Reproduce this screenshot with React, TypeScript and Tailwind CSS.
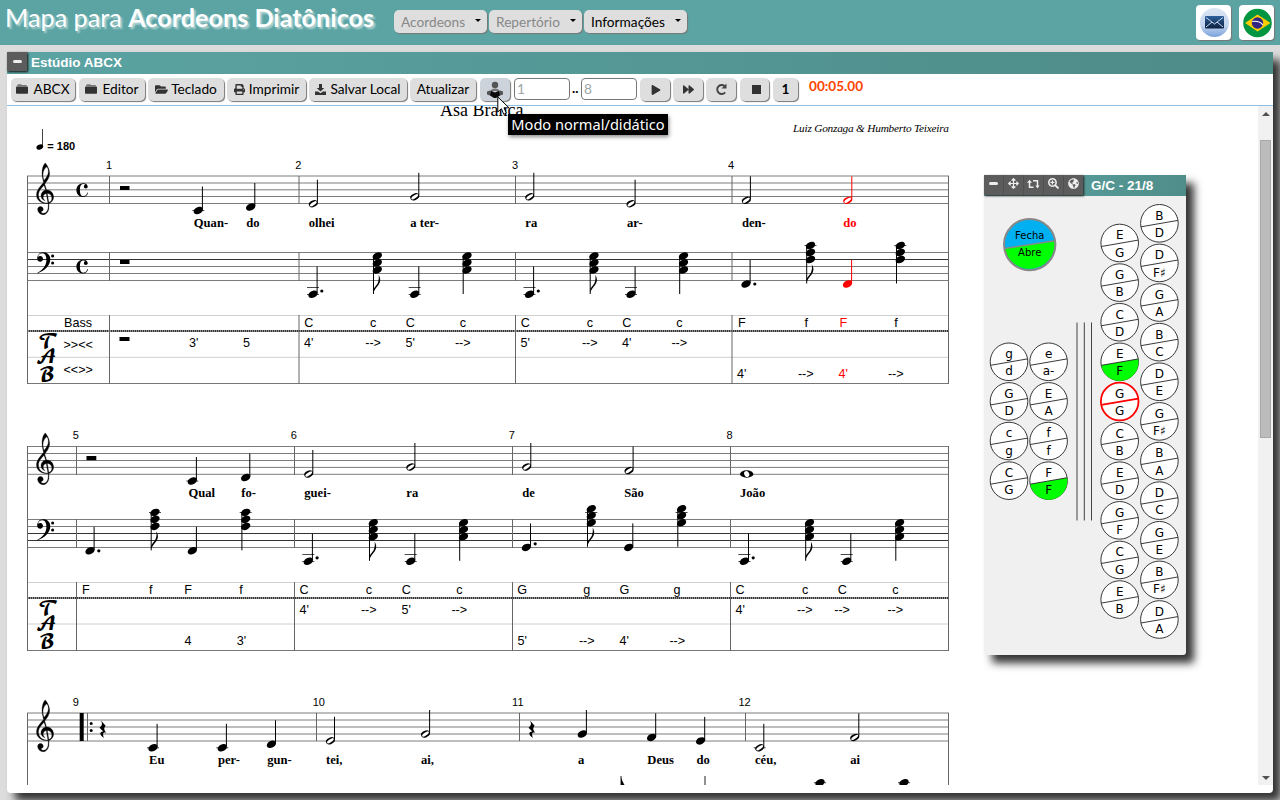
import React from "react";
import { FaPrint, FaFolderOpen, FaPlay, FaForward, FaSearchPlus, FaGlobeAmericas, FaArrowsAlt } from "react-icons/fa";

/* ---------- music notation primitives ---------- */

const TREBLE =
  "M9.69-37.41c.09-.09.24-.06.36 0c.12.09.57.6.96 1.11c1.77 2.34 3.21 5.85 3.57 8.73c.21 1.56.03 3.27-.45 4.86c-.69 2.31-1.92 4.47-4.23 7.44c-.3.39-.57.72-.6.75c-.03.06 0 .15.18.78c.54 1.68 1.38 4.44 1.68 5.49l.09.42l.39 0c1.47.09 2.76.51 3.96 1.29c1.83 1.23 3.06 3.21 3.39 5.52c.09.45.12 1.29.06 1.74c-.09 1.02-.33 1.83-.75 2.73c-.84 1.71-2.28 3.06-4.02 3.72l-.33.12l.03 1.26c0 1.74-.06 3.63-.21 4.62c-.45 3.06-2.19 5.49-4.47 6.21c-.57.18-.9.21-1.59.21c-.69 0-1.02-.03-1.65-.21c-1.14-.27-2.13-.84-2.94-1.65c-.99-.99-1.56-2.16-1.71-3.54c-.09-.81.06-1.53.45-2.13c.63-.99 1.83-1.56 3-1.53c1.5.09 2.64 1.32 2.73 2.94c.06 1.47-.93 2.7-2.37 2.97l-.3.1c.9 1.1 1.9 1.6 3.2 1.5c3.2-.2 4.9-3.2 5.1-8.4l-.02-2.5l-1.9.1c-4.4.1-8.4-2-10.2-5.4c-1.5-3-1.2-6.4.3-9.3c1.5-2.9 3.8-5.4 6.6-8.6l-.5-2c-1.3-5-1.9-10.6-.3-15.2c.6-2 1.7-3.6 2.6-4.6zM11.3-33.2c-2.3 1-4.1 5.3-4 8.9c.1 2.1.5 4 1.1 6.1c2.6-3.2 4.7-6.3 4.9-9.6c.1-2.6-.6-4.9-2-5.4zM8.5-13c-3.3 3.6-5.5 6-6.1 9.2c-.7 3.5.8 7.2 4 9.2c1.8 1.1 4.1 1.5 6.4 1.3l-1.8-10.5c-2.2.5-3.5 2-3.5 4.1c0 1.6.8 2.9 2.3 3.9c-3-.9-4.7-3-4.7-5.7c0-3.1 2-5.5 5.2-6.4zM12.1-4l1.7 10.2c2.2-.8 3.6-2.8 3.4-5.3c-.2-3-2.2-4.9-5.1-4.9z";

function Treble({ y }: { y: number }) {
  return <path d={TREBLE} fillRule="evenodd" transform={`translate(36.4 ${y}) scale(.9)`} stroke="black" strokeWidth=".35" />;
}

function BassClef({ y }: { y: number }) {
  return (
    <g transform={`translate(37 ${y})`}>
      <path d="M.2 20.6c5.6-3 9.2-7.2 9.2-13C9.4 3.600 8.300.800 5.300.800C3 .800 1.200 2.300.900 4.400A2.900 2.900 0 1 1 .200 6.500C.100 2.700 2.400-.200 6.100-.200c4.300 0 7.200 2.700 7.200 7c0 6.500-5.600 11.400-13.100 14.100z" />
      <circle cx="15.600" cy="3.600" r="1.500" />
      <circle cx="15.600" cy="10.600" r="1.500" />
    </g>
  );
}

function CommonTime({ y }: { y: number }) {
  return (
    <path
      transform={`translate(76.300 ${y})`}
      d="M7-.1C2.800-.1.100 2.800.100 6.800s2.700 6.900 6.600 6.900c2.700 0 4.500-1.700 5-4.300l-.6-.1c-.6 2.200-2 3.600-3.900 3.600c-2.700 0-3.600-2.300-3.600-6.100c0-4.200 1-6.200 3.600-6.200c.8 0 1.500.2 2 .7a2 2 0 1 0 2.300 2.500C11.400 1.500 9.700-.1 7-.1z"
    />
  );
}

function Head({ x, y, c = "black" }: { x: number; y: number; c?: string }) {
  return <ellipse cx={x} cy={y} rx="4.900" ry="3.400" fill={c} transform={`rotate(-26 ${x} ${y})`} />;
}

function Ledger({ x, y }: { x: number; y: number }) {
  return <path d={`M${x - 6} ${y}H${x + 6}`} stroke="#333" strokeWidth=".9" />;
}

type N = { x: number; y: number; h?: boolean; led?: number[]; top?: number; c?: string; dot?: number };

function Note({ x, y, h, led = [], top, c = "black", dot }: N) {
  return (
    <g>
      {led.map((l) => (
        <Ledger key={l} x={x} y={l} />
      ))}
      <path d={`M${x + 4.100} ${y - 1}V${top ?? y - 24}`} stroke={c} strokeWidth="1" />
      {h ? (
        <g transform={`rotate(-26 ${x} ${y})`}>
          <ellipse cx={x} cy={y} rx="4.700" ry="3.200" fill={c} />
          <ellipse cx={x} cy={y} rx="4" ry="1.450" fill="white" transform={`rotate(-9 ${x} ${y})`} />
        </g>
      ) : (
        <Head x={x} y={y} c={c} />
      )}
      {dot !== undefined && <circle cx={x + 8.800} cy={dot} r="1.600" />}
    </g>
  );
}

type Ch = { x: number; y: number; flag?: boolean; led?: number };

function Chord({ x, y, flag, led }: Ch) {
  const b = y + 38;
  return (
    <g>
      {led !== undefined && <Ledger x={x} y={led} />}
      <path d={`M${x - 3.800} ${y}V${b}`} stroke="black" strokeWidth="1" />
      <Head x={x} y={y} />
      <Head x={x} y={y + 7} />
      <Head x={x} y={y + 14} />
      {flag && (
        <path
          d={`M${x + 1.300} ${b - 19}c2.400 3.600 2 7-.2 10c-1.500 2-3.700 4-4.900 7.500v-3.500c1.300-2.400 3.300-3.800 4.300-6.100c1-2.500 1.300-5 .8-7.900z`}
        />
      )}
    </g>
  );
}

function QuarterRest({ x, y }: { x: number; y: number }) {
  return (
    <path
      transform={`translate(${x} ${y})`}
      d="M-1.700 0L2.900 5.200C1.200 7.400.900 8.800 3.500 12.200C.600 11.300-.4 12.700 1.200 17.400C-3.500 14.800-3.300 10.800.600 11.100L-3.200 7.200C-.4 5-.1 3.400-1.700 0z"
    />
  );
}

const sans = "font-['Liberation_Sans',sans-serif]";
const serif = "font-['Liberation_Serif',serif]";

type T = [number, string, string?];

function Row({ y, items }: { y: number; items: T[] }) {
  return (
    <g className={`${sans} text-[12.6px]`} textAnchor="middle">
      {items.map(([x, t, c]) => (
        <text key={x} x={x - 4.200} y={y} fill={c ?? "black"}>
          {t}
        </text>
      ))}
    </g>
  );
}

function Lyrics({ y, items }: { y: number; items: T[] }) {
  return (
    <g className={`${serif} text-[12.6px] font-bold`}>
      {items.map(([x, t, c]) => (
        <text key={x} x={x} y={y} fill={c ?? "black"}>
          {t}
        </text>
      ))}
    </g>
  );
}

function Numbers({ y, items }: { y: number; items: T[] }) {
  return (
    <g className={`${sans} text-[11px]`} textAnchor="middle">
      {items.map(([x, t]) => (
        <text key={x} x={x} y={y}>
          {t}
        </text>
      ))}
    </g>
  );
}

function Lines({ ys, dark = [] }: { ys: number[]; dark?: number[] }) {
  return (
    <g strokeWidth="1">
      {ys.map((y) => (
        <path key={y} d={`M27 ${y}H949`} stroke={dark.includes(y) ? "#333" : "#7c7c7c"} />
      ))}
    </g>
  );
}

function Bars({ xs, spans }: { xs: number[]; spans: [number, number][] }) {
  return (
    <g stroke="#666" strokeWidth="1">
      {xs.map((x) => spans.map(([a, b]) => <path key={`${x}-${a}`} d={`M${x} ${a}V${b}`} />))}
    </g>
  );
}

function TabStaff({ top, dash, mid, bottom }: { top: number; dash: number; mid: number; bottom: number }) {
  return (
    <g>
      <path d={`M27 ${top}H949`} stroke="#d0d0d0" />
      <path d={`M27 ${dash}H949`} stroke="#8a8a8a" strokeWidth="1.600" />
      <path d={`M27 ${dash}H949`} stroke="#111" strokeWidth="1.600" strokeDasharray="1.200 .8" />
      <path d={`M27 ${mid}H949`} stroke="#d0d0d0" />
      <path d={`M27 ${bottom}H949`} stroke="#777" />
      <g className="font-['DejaVu_Math_TeX_Gyre','DejaVu_Serif',serif] text-[18px]" textAnchor="middle">
        <text x="48.300" y={dash + 17}>𝓣</text>
        <text x="46" y={dash + 32}>𝓐</text>
        <text x="46.500" y={dash + 49.500}>𝓑</text>
      </g>
    </g>
  );
}

const RED = "#ff0000";

function Score() {
  return (
    <svg className="block h-[679px] w-[1251px]" viewBox="7 106 1251 679">
      <text x="440" y="116" className={`${serif} text-[18px]`}>Asa Branca</text>
      <text x="949" y="132" textAnchor="end" textLength="156" className={`${serif} text-[11.3px] italic`}>
        Luiz Gonzaga &amp; Humberto Teixeira
      </text>
      <path d="M42.500 146V129" stroke="#444" />
      <ellipse cx="39.800" cy="147" rx="3.500" ry="2.500" transform="rotate(-24 39.800 147)" />
      <text x="47.300" y="150" className={`${sans} text-[11px] font-bold`}>= 180</text>

      {/* system 1 */}
      <Numbers y={169} items={[[109, "1"], [298.300, "2"], [515, "3"], [731, "4"]]} />
      <Lines ys={[176, 183, 189.800, 196.500, 203.500]} />
      <Lines ys={[252.500, 259.500, 266.500, 273.500, 280.500]} dark={[259.500]} />
      <TabStaff top={315.500} dash={331} mid={357.300} bottom={383.500} />
      <Bars xs={[27.500, 948.500]} spans={[[176, 384]]} />
      <Bars xs={[109.500, 299, 515.500, 732, 948.500]} spans={[[176, 204], [252, 281], [315, 384]]} />
      <Treble y={197} />
      <BassClef y={252.500} />
      <CommonTime y={183.300} />
      <CommonTime y={259.800} />
      <g>
        <rect x="120" y="186" width="9.500" height="4" />
        <rect x="120" y="260" width="9.500" height="4" />
        <rect x="119.500" y="337" width="10" height="4" />
      </g>
      <Note x={198.300} y={210.500} led={[210.500]} />
      <Note x={250.700} y={207} />
      <Note x={313.300} y={203.700} h />
      <Note x={414.700} y={196.800} h />
      <Note x={529.700} y={196.800} h />
      <Note x={631} y={203.700} h />
      <Note x={746.300} y={200.300} h />
      <Note x={847.700} y={200.300} h c={RED} />
      <Lyrics
        y={227}
        items={[[193.800, "Quan-"], [246.300, "do"], [308.700, "olhei"], [410.300, "a ter-"], [525.300, "ra"], [627, "ar-"], [742, "den-"], [843.300, "do", RED]]}
      />
      <Note x={313} y={294.300} led={[287.500, 294.500]} top={266.500} dot={291} />
      <Chord x={377.300} y={256} flag />
      <Note x={414.700} y={294.300} led={[287.500, 294.500]} top={266.500} />
      <Chord x={467} y={256} />
      <Note x={529.500} y={294.300} led={[287.500, 294.500]} top={266.500} dot={291} />
      <Chord x={594} y={256} flag />
      <Note x={631} y={294.300} led={[287.500, 294.500]} top={266.500} />
      <Chord x={683.500} y={256} />
      <Note x={746} y={284} dot={284} />
      <Chord x={810.500} y={245.500} flag led={245.500} />
      <Note x={847.500} y={284} c={RED} />
      <Chord x={900.300} y={245.500} led={245.500} />
      <g className={`${sans} text-[12.6px]`}>
        <text x="64" y="327">Bass</text>
        <text x="63.500" y="349">&gt;&gt;&lt;&lt;</text>
        <text x="63.500" y="374">&lt;&lt;&gt;&gt;</text>
      </g>
      <Row
        y={327}
        items={[[313, "C"], [377.300, "c"], [414.500, "C"], [467, "c"], [529.500, "C"], [594, "c"], [631, "C"], [683.500, "c"], [746, "F"], [810.500, "f"], [847.500, "F", RED], [900.300, "f"]]}
      />
      <Row
        y={347}
        items={[[198, "3'"], [250.700, "5"], [313, "4'"], [377.300, "-->"], [414.500, "5'"], [467, "-->"], [529.500, "5'"], [594, "-->"], [631, "4'"], [683.500, "-->"]]}
      />
      <Row y={378} items={[[746, "4'"], [810, "-->"], [847.500, "4'", RED], [900, "-->"]]} />

      {/* system 2 */}
      <Numbers y={439} items={[[75.800, "5"], [293.800, "6"], [511.700, "7"], [729.500, "8"]]} />
      <Lines ys={[446.500, 453.500, 460.500, 467.400, 474.300]} />
      <Lines ys={[519.500, 526.500, 533.500, 540.500, 547.500]} dark={[533.500, 540.500]} />
      <TabStaff top={582.500} dash={598} mid={624} bottom={650.500} />
      <Bars xs={[27.500, 948.500]} spans={[[446, 651]]} />
      <Bars xs={[76.500, 294.500, 512.500, 730.500, 948.500]} spans={[[446, 475], [519, 548], [582, 651]]} />
      <Treble y={467} />
      <BassClef y={519.500} />
      <rect x="86.500" y="456" width="9.800" height="4.200" />
      <Note x={192.300} y={481} led={[481]} />
      <Note x={245.700} y={477.500} />
      <Note x={308.700} y={474} h />
      <Note x={410.800} y={467} h />
      <Note x={526.700} y={467} h />
      <Note x={629} y={470.500} h />
      <ellipse cx="746.700" cy="474" rx="6.700" ry="3.700" />
      <ellipse cx="746.700" cy="474" rx="2.400" ry="3.100" fill="white" transform="rotate(-28 746.700 474)" />
      <Lyrics
        y={497}
        items={[[188.500, "Qual"], [241.300, "fo-"], [304.300, "guei-"], [406.300, "ra"], [522.300, "de"], [624.300, "São"], [740, "João"]]}
      />
      <Note x={90} y={550.800} dot={550.800} />
      <Chord x={155} y={512.400} flag led={512.500} />
      <Note x={192.300} y={550.800} />
      <Chord x={245.700} y={512.400} led={512.500} />
      <Note x={308.300} y={561.300} led={[554.500, 561.500]} top={533.500} dot={557.800} />
      <Chord x={373.300} y={522.800} flag />
      <Note x={410.700} y={561.300} led={[554.500, 561.500]} top={533.500} />
      <Chord x={463.500} y={522.800} />
      <Note x={526.400} y={547.400} dot={543.800} />
      <Chord x={591.300} y={508.800} flag led={512.500} />
      <Note x={628.700} y={547.400} />
      <Chord x={681.600} y={508.800} led={512.500} />
      <Note x={744.400} y={561.300} led={[554.500, 561.500]} top={533.500} dot={557.800} />
      <Chord x={809.500} y={522.800} flag />
      <Note x={846.700} y={561.300} led={[554.500, 561.500]} top={533.500} />
      <Chord x={899.600} y={522.800} />
      <Row
        y={594}
        items={[[90, "F"], [155, "f"], [192.300, "F"], [245.300, "f"], [308.300, "C"], [373, "c"], [410.500, "C"], [463.500, "c"], [526.400, "G"], [591, "g"], [628.500, "G"], [681.300, "g"], [744.300, "C"], [809.300, "c"], [846.500, "C"], [899.500, "c"]]}
      />
      <Row
        y={614}
        items={[[308.300, "4'"], [373, "-->"], [410.500, "5'"], [463.500, "-->"], [744.300, "4'"], [809, "-->"], [846.300, "-->"], [899.500, "-->"]]}
      />
      <Row y={645} items={[[192.300, "4"], [245.700, "3'"], [526.400, "5'"], [591, "-->"], [628.500, "4'"], [681.500, "-->"]]} />

      {/* system 3 */}
      <Numbers y={706} items={[[75.800, "9"], [318.800, "10"], [517.800, "11"], [744.500, "12"]]} />
      <Lines ys={[713, 720, 727, 734, 741]} />
      <Bars xs={[27.500, 948.500]} spans={[[713, 785]]} />
      <Bars xs={[87.500, 316.500, 519.500, 745.500, 948.500]} spans={[[713, 741]]} />
      <rect x="79.700" y="713" width="4" height="28" />
      <circle cx="91.200" cy="723.500" r="1.500" />
      <circle cx="91.200" cy="730.500" r="1.500" />
      <Treble y={734} />
      <QuarterRest x={102.700} y={720.500} />
      <Note x={153} y={747.800} led={[747.800]} />
      <Note x={222.300} y={747.800} led={[747.800]} />
      <Note x={271.400} y={744.300} />
      <Note x={330.400} y={740.800} h />
      <Note x={425.500} y={734} h />
      <QuarterRest x={531.700} y={720.500} />
      <Note x={582.300} y={734} />
      <Note x={651.600} y={737.400} />
      <Note x={700.600} y={740.900} />
      <Note x={759.700} y={747.800} led={[747.800]} h />
      <Note x={854.700} y={737.400} h />
      <Lyrics
        y={764}
        items={[[149, "Eu"], [218, "per-"], [267.300, "gun-"], [326, "tei,"], [421, "ai,"], [578, "a"], [647.300, "Deus"], [696.500, "do"], [755, "céu,"], [850.300, "ai"]]}
      />
      <path d="M621 776v9M705 776v9" stroke="#222" />
      <path d="M621 777c.5 3 2 5 3.500 8h-3.500z" />
      <Ledger x={820} y={782.700} />
      <Head x={820} y={782.700} />
      <Ledger x={904} y={782.700} />
      <Head x={904} y={782.700} />
    </svg>
  );
}

/* ---------- accordion keyboard ---------- */

function Key({ x, y, a, b, on, red }: { x: number; y: number; a: string; b: string; on?: boolean; red?: boolean }) {
  return (
    <g transform={`translate(${x} ${y})`} textAnchor="middle" className="font-['DejaVu_Sans',sans-serif] text-[12px]">
      <circle r="18.800" fill="white" stroke={red ? RED : "#222"} strokeWidth={red ? 1.800 : 0.900} />
      {on && <path d="M-18.400 3.500L18.500-2.900A18.600 18.600 0 0 1-18.400 3.500z" fill="#00ff00" />}
      <path d="M-18.400 3.500L18.500-2.900" stroke={red ? RED : "#222"} strokeWidth={red ? 1.800 : 0.900} />
      <text y="-3.600">{a}</text>
      <text y="13.600">{b}</text>
    </g>
  );
}

const OUTER = ["B/D", "D/F♯", "G/A", "B/C", "D/E", "G/F♯", "B/A", "D/C", "G/E", "B/F♯", "D/A"];
const INNER = ["E/G", "G/B", "C/D", "E/F", "G/G", "C/B", "E/D", "G/F", "C/G", "E/B"];
const BASS_L = ["g/d", "G/D", "c/g", "C/G"];
const BASS_R = ["e/a-", "E/A", "f/f", "F/F"];

function keys(list: string[], x: number, y0: number, on = -1, red = -1) {
  return list.map((k, i) => {
    const [a, b] = k.split("/");
    return <Key key={`${x}-${i}`} x={x} y={y0 + i * 39.620} a={a} b={b} on={i === on} red={i === red} />;
  });
}

function Keyboard() {
  const cell = "flex h-[20px] w-5 items-center justify-center border-r border-[#505050] pb-[3px]";
  return (
    <div className="absolute left-[977px] top-[123px] w-[202px] overflow-visible rounded-b-[3px] bg-[#f0f0f0] shadow-[8px_8px_8px_#333]">
      <div className="flex h-[21px] bg-gradient-to-r from-[#5ba4a3] to-[#4f8d89]">
        <div className="flex h-[20px] bg-[#5c5c5c] text-[#eee] shadow-[1px_1px_2px_#222]">
          <span className={cell}><span className="h-[3px] w-[9px] rounded-sm bg-[#eee]" /></span>
          <span className={cell}><FaArrowsAlt size={11} /></span>
          <span className={cell}>
            <svg className="h-[10px] w-[13px]" viewBox="0 0 13 10" fill="none" stroke="#eee" strokeWidth="1.500">
              <path d="M2.500 3v5.200h4M6 1.800h4.500V8" />
              <path d="M0 3.800l2.500-3 2.500 3zM8.500 6.500h4l-2 3z" fill="#eee" stroke="none" />
            </svg>
          </span>
          <span className={cell}><FaSearchPlus size={11} /></span>
          <span className="flex h-[20px] w-[19px] items-center justify-center pb-[3px]"><FaGlobeAmericas size={11} /></span>
        </div>
        <span className={`${sans} ml-[8px] pt-[1px] text-[13.5px] font-bold leading-[20px] text-white`}>G/C - 21/8</span>
      </div>
      <svg className="block h-[459px] w-[202px]" viewBox="984 196 202 459">
        <g transform="translate(0 .4)">
          <circle cx="1029.700" cy="244.200" r="25.700" fill="#00b0f0" />
          <path d="M1004.300 248.200L1055 240.300A25.700 25.700 0 0 1 1004.300 248.200z" fill="#00ff00" />
          <circle cx="1029.700" cy="244.200" r="25.700" fill="none" stroke="#888" strokeWidth="2" />
          <path d="M1004.300 248.200L1055 240.300" stroke="#888" strokeWidth="1.500" />
        </g>
        <g className="font-['DejaVu_Sans',sans-serif] text-[10px]" textAnchor="middle">
          <text x="1029.700" y="239">Fecha</text>
          <text x="1029.700" y="256">Abre</text>
        </g>
        <path d="M1077 322.500V520.500M1084.300 322.500V520.500M1091.500 322.500V520.500" stroke="#444" />
        {keys(BASS_L, 1009, 361.800)}
        {keys(BASS_R, 1048.600, 361.800, 3)}
        {keys(INNER, 1119.700, 243, 3, 4)}
        {keys(OUTER, 1159.400, 223.300)}
      </svg>
    </div>
  );
}

/* ---------- chrome ---------- */

const face = "flex h-[23px] shrink-0 items-center rounded-[5px] whitespace-nowrap text-[13.7px] text-black shadow-[1px_1px_1px_#777]";
const btn = `${face} justify-center bg-[#dedede] pb-px`;

function FolderIcon() {
  return (
    <svg className="mr-[5px] h-[10px] w-[12px]" viewBox="0 0 12 10" fill="#333">
      <path d="M1.200 2.300V1l.8-.8h3.200L6 1h4.300l.7.700v.600z" fill="#777" />
      <rect y="2.500" width="12" height="7.200" rx=".8" />
    </svg>
  );
}

function SaveIcon() {
  return (
    <svg className="mr-[4px] h-[11px] w-[11px]" viewBox="0 0 11 11" fill="#333">
      <path d="M4 0h3v4h2.300L5.500 7.500 1.700 4H4z" />
      <path d="M0 7.500h3l2.500 1.800L8 7.500h3V11H0z" />
    </svg>
  );
}

function ReaderIcon() {
  return (
    <svg className="h-[18px] w-[18px]" viewBox="0 0 18 18">
      <circle cx="9" cy="4" r="3.200" fill="#555" />
      <path d="M4.500 10c1-2 2.500-2.600 4.500-2.600s3.500.6 4.500 2.600z" fill="#777" />
      <path d="M9 11.500L4.500 9.500 4 14.500l4 2.500h2l4-2.500-.5-5z" fill="#0a0a0a" />
      <path d="M1 10.500l3-1v5l-3-1zM17 10.500l-3-1v5l3-1z" fill="#555" />
    </svg>
  );
}

function Menu({ label, w, off }: { label: string; w: string; off?: boolean }) {
  return (
    <div className={`${face} ${w} justify-between bg-[#dedede] pl-[7px] pr-[6px] pt-px`}>
      <span className={off ? "text-[#888]" : "text-black"}>{label}</span>
      <span className="mb-[3px] h-0 w-0 border-x-[3px] border-t-[3.5px] border-x-transparent border-t-black" />
    </div>
  );
}

export default function App() {
  return (
    <div className="relative flex h-[800px] w-[1280px] flex-col overflow-hidden bg-[#dcdcdc] font-['Lato',sans-serif] text-[13.7px]">
      <header className="flex h-[45px] shrink-0 bg-[#5ba4a3]">
        <h1 className="ml-[5px] w-[389px] whitespace-nowrap pt-[3px] text-[25.2px] leading-[29px] text-white [text-shadow:2px_2px_2px_rgba(255,255,255,0.55)]">
          Mapa para <b>Acordeons Diatônicos</b>
        </h1>
        <nav className="mt-[10px] flex gap-[2px]">
          <Menu label="Acordeons" w="w-[93px]" off />
          <Menu label="Repertório" w="w-[93px]" off />
          <Menu label="Informações" w="w-[103px]" />
        </nav>
        <div className="ml-auto mr-[6px] mt-[5px] flex gap-[8px]">
          <div className="flex h-[35px] w-[35px] items-center justify-center rounded-[4px] bg-white shadow-[1px_1px_1px_#777]">
            <svg className="h-[30px] w-[30px]" viewBox="0 0 30 30">
              <defs>
                <linearGradient id="mail" x2="0" y2="1">
                  <stop offset="0" stopColor="#dbe6f3" />
                  <stop offset=".6" stopColor="#c3d5ee" />
                  <stop offset="1" stopColor="#7ba2dc" />
                </linearGradient>
                <linearGradient id="env" x2="0" y2="1">
                  <stop offset="0" stopColor="#2c5f9c" />
                  <stop offset="1" stopColor="#0d2140" />
                </linearGradient>
              </defs>
              <circle cx="15.500" cy="14.500" r="14.500" fill="url(#mail)" />
              <rect x="6" y="8" width="19" height="12.500" rx="1" fill="url(#env)" />
              <path d="M7 9.500l8.500 6.500L24 9.500M7 19l6-5M24 19l-6-5" fill="none" stroke="#c9d9ec" strokeWidth="1" />
            </svg>
          </div>
          <div className="flex h-[35px] w-[35px] items-center justify-center rounded-[4px] bg-white shadow-[1px_1px_1px_#777]">
            <svg className="h-[30px] w-[30px]" viewBox="0 0 30 30">
              <circle cx="15.500" cy="15" r="14.300" fill="#009540" />
              <path d="M3 15L15.500 6.500 28.500 15 15.500 23.500z" fill="#fc0" />
              <circle cx="15.500" cy="15" r="5.700" fill="#312783" />
              <path d="M10.300 13.500c4-.7 8 .3 10.500 3.300" fill="none" stroke="white" strokeWidth="1.200" />
            </svg>
          </div>
        </div>
      </header>

      <main className="relative ml-[7px] mt-[7px] flex h-[741px] w-[1266px] flex-col rounded-b-[4px] bg-white shadow-[8px_8px_8px_#333]">
        <div className="flex h-[22px] shrink-0 bg-gradient-to-r from-[#5ba4a3] to-[#4d8b87]">
          <span className="flex h-[19px] w-[20px] items-center justify-center bg-[#5c5c5c] shadow-[1px_1px_2px_#111]">
            <span className="h-[3px] w-[9px] rounded-sm bg-[#eee]" />
          </span>
          <span className={`${sans} ml-[4px] text-[13.5px] font-bold leading-[21px] text-white`}>Estúdio ABCX</span>
        </div>

        <div className="flex h-[32px] shrink-0 items-start border-b border-[#8fbfe0] pl-[4px] pt-[4px]">
          <div className={`${btn} w-[64px]`}><FolderIcon />ABCX</div>
          <div className={`${btn} ml-[4px] w-[66px]`}><FolderIcon />Editor</div>
          <div className={`${btn} ml-[3px] w-[76px]`}><FaFolderOpen className="mr-[3px] text-[#333]" size={13} />Teclado</div>
          <div className={`${btn} ml-[3px] w-[79px]`}><FaPrint className="mr-[4px] text-[#333]" size={11} />Imprimir</div>
          <div className={`${btn} ml-[3px] w-[98px]`}><SaveIcon />Salvar Local</div>
          <div className={`${btn} ml-[3px] w-[66px]`}>Atualizar</div>
          <div className={`${face} ml-[4px] w-[30px] justify-center bg-[#ccd3da]`}><ReaderIcon /></div>
          <div className="ml-[4px] h-[22px] w-[56px] rounded-[4px] border border-[#777] bg-white pl-[2px] leading-[20px] text-[#9aa5a8]">1</div>
          <b className="w-[11px] pl-[2px] leading-[20px]">..</b>
          <div className="h-[22px] w-[56px] rounded-[4px] border border-[#777] bg-white pl-[2px] leading-[20px] text-[#9aa5a8]">8</div>
          <div className={`${btn} ml-[3px] w-[30px]`}><FaPlay className="ml-px mt-px" size={10} color="#333" /></div>
          <div className={`${btn} ml-[3px] w-[30px]`}><FaForward className="mt-px" size={11} color="#333" /></div>
          <div className={`${btn} ml-[3px] w-[30px]`}>
            <svg className="h-[13px] w-[13px]" viewBox="0 0 13 13">
              <path d="M10.200 9.300A4.500 4.500 0 1 1 9.600 3" fill="none" stroke="#444" strokeWidth="1.900" />
              <path d="M11.500.5v5h-5z" fill="#444" />
            </svg>
          </div>
          <div className={`${btn} ml-[4px] w-[29px]`}><span className="ml-[3px] mt-px h-[9px] w-[9px] bg-[#333]" /></div>
          <div className={`${btn} ml-[4px] w-[25px] font-bold`}>1</div>
          <span className="ml-[11px] text-[13.600px] font-bold leading-[16px] text-[#ff4500]">00:05.00</span>
        </div>

        <div className="flex h-[679px]">
          <Score />
          <div className="flex w-[15px] flex-col items-center bg-[#f1f1f1]">
            <span className="mt-[6px] h-0 w-0 border-x-[4px] border-b-[4px] border-x-transparent border-b-[#505050]" />
            <div className="mt-[24px] h-[298px] w-[11px] border border-[#a8a8a8] bg-[#bcbcbc]" />
            <span className="mb-[5px] mt-auto h-0 w-0 border-x-[4px] border-t-[4px] border-x-transparent border-t-[#505050]" />
          </div>
        </div>

        <Keyboard />
      </main>

      <div className="absolute left-[508px] top-[114px] flex h-[21px] w-[160px] items-center justify-center bg-black font-['Noto_Sans',sans-serif] text-[14.6px] text-white shadow-[1px_2px_4px_rgba(0,0,0,0.45)]">
        Modo normal/didático
      </div>
      <svg className="absolute left-[497px] top-[96px] h-[21px] w-[14px]" viewBox="0 0 14 21">
        <path d="M.8 1v15l3.600-3.300 2.300 5.600 2.600-1.100-2.300-5.400H12z" fill="white" stroke="black" strokeWidth="1" />
      </svg>
    </div>
  );
}
